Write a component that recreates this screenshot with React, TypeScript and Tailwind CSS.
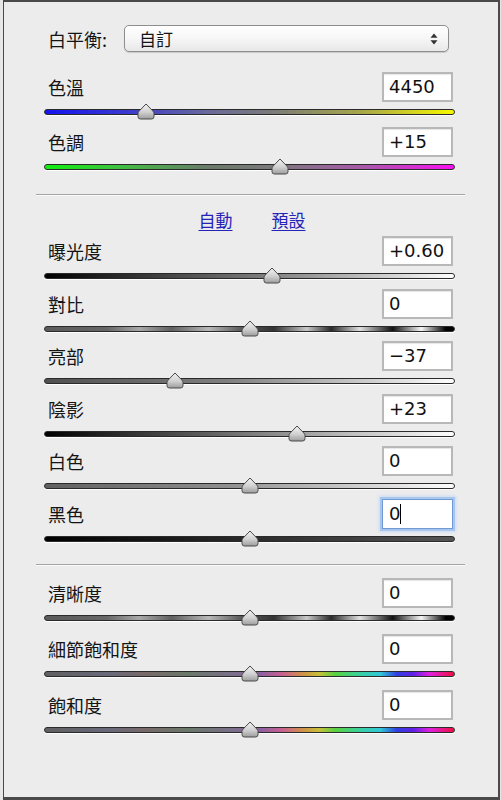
import React from "react";

type Row = {
  label: string;
  value: string;
  pos: number; // thumb center x in page px
  track: string;
  focused?: boolean;
};

const TRACK_LEFT = 44;
const TRACK_W = 411;

const contrast =
  "bg-[linear-gradient(to_right,#5a5a5a_0%,#666_15%,#a8a8a8_23%,#606060_31%,#b8b8b8_40%,#5a5a5a_48%,#333_56%,#c8c8c8_64%,#2a2a2a_70%,#e0e0e0_77%,#111_85%,#f4f4f4_92%,#000_98%)]";
const sat =
  "bg-[linear-gradient(to_right,#606060_0%,#68687a_15%,#786a6a_25%,#6a786a_35%,#787088_45%,#9060a0_53%,#c86090_58%,#d09048_63%,#c8c038_67%,#58d040_71%,#38d0a0_77%,#30c8d8_82%,#3040e0_86%,#6020e8_90%,#e020e0_94%,#f01040_100%)]";

const group1: Row[] = [
  {
    label: "色溫",
    value: "4450",
    pos: 146,
    track:
      "bg-[linear-gradient(to_right,#1414f0_0%,#3a3ad0_20%,#6a6a9a_40%,#7a7a7a_55%,#a8a848_78%,#f8f800_100%)]",
  },
  {
    label: "色調",
    value: "+15",
    pos: 280,
    track:
      "bg-[linear-gradient(to_right,#10f010_0%,#40c040_18%,#6a7a6a_40%,#7a7a7a_55%,#a858a8_78%,#f810f0_100%)]",
  },
];

const group2: Row[] = [
  {
    label: "曝光度",
    value: "+0.60",
    pos: 272,
    track: "bg-[linear-gradient(to_right,#000_0%,#505050_35%,#9a9a9a_65%,#fff_100%)]",
  },
  { label: "對比", value: "0", pos: 250, track: contrast },
  {
    label: "亮部",
    value: "−37",
    pos: 175,
    track: "bg-[linear-gradient(to_right,#505050_0%,#808080_45%,#fff_100%)]",
  },
  {
    label: "陰影",
    value: "+23",
    pos: 297,
    track: "bg-[linear-gradient(to_right,#000_0%,#606060_40%,#c0c0c0_75%,#fff_100%)]",
  },
  {
    label: "白色",
    value: "0",
    pos: 250,
    track: "bg-[linear-gradient(to_right,#606060_0%,#909090_45%,#fff_100%)]",
  },
  {
    label: "黑色",
    value: "0",
    pos: 250,
    track: "bg-[linear-gradient(to_right,#000_0%,#2a2a2a_50%,#555_100%)]",
    focused: true,
  },
];

const group3: Row[] = [
  { label: "清晰度", value: "0", pos: 250, track: contrast },
  { label: "細節飽和度", value: "0", pos: 250, track: sat },
  { label: "飽和度", value: "0", pos: 250, track: sat },
];

function Thumb({ pos }: { pos: number }) {
  const pct = ((pos - TRACK_LEFT) / TRACK_W) * 100;
  return (
    <svg
      width="18"
      height="17"
      viewBox="0 0 18 17"
      className="absolute top-[-6px] -translate-x-1/2"
      style={{ left: `${pct}%` }}
    >
      <defs>
        <linearGradient id="thumbg" x1="0" y1="0" x2="0" y2="1">
          <stop offset="0" stopColor="#f4f4f4" />
          <stop offset="0.55" stopColor="#d0d0d0" />
          <stop offset="1" stopColor="#9c9c9c" />
        </linearGradient>
      </defs>
      <path
        d="M9 1 L15.8 8 Q17 9.2 17 10.6 L17 13.6 Q17 16 14.6 16 L3.4 16 Q1 16 1 13.6 L1 10.6 Q1 9.2 2.2 8 Z"
        fill="url(#thumbg)"
        stroke="#4a4a4a"
        strokeWidth="1"
      />
    </svg>
  );
}

function SliderRow({ row, h }: { row: Row; h: string }) {
  return (
    <div className={`${h} flex flex-col`}>
      <div className="flex items-center justify-between h-[30px] pl-[4px] pr-[2px]">
        <span className="text-[18px] leading-[20px] text-[#141414] font-['Noto_Sans_CJK_TC','Noto_Sans_CJK_SC',sans-serif]">
          {row.label}
        </span>
        <div
          className={
            row.focused
              ? "w-[71px] h-[30px] bg-white border border-[#6f9ad6] shadow-[0_0_0_2px_#a9c6ee,0_0_3px_3px_#c8dbf5] flex items-center pl-[6px]"
              : "w-[71px] h-[30px] bg-white border-2 border-[#b8b8b8] shadow-[inset_0_1px_1px_rgba(0,0,0,0.1)] flex items-center pl-[5px]"
          }
        >
          <span className="text-[18px] leading-[20px] text-[#111] font-['DejaVu_Sans',sans-serif]">
            {row.value}
          </span>
          {row.focused && <span className="w-px h-[20px] bg-black" />}
        </div>
      </div>
      <div className="relative mt-[7px] h-[6px]">
        <div
          className={`h-[6px] rounded-full border border-[#2a2a2a] shadow-[0_1px_0_#ffffff] ${row.track}`}
        />
        <Thumb pos={row.pos} />
      </div>
    </div>
  );
}

export default function App() {
  return (
    <div className="w-[501px] h-[800px] bg-[#e6e6e6] pl-[3px] pr-px">
      <div className="h-full border-l border-t-2 border-r-2 border-b-[3px] border-[#4a4a4a] bg-[#ececec] flex flex-col">
        {/* White balance */}
        <div className="mt-[23px] flex items-center pl-[44px]">
          <span className="w-[76px] text-[18px] leading-[20px] text-[#141414] font-['Noto_Sans_CJK_TC','Noto_Sans_CJK_SC',sans-serif]">
            白平衡:
          </span>
          <div className="w-[325px] h-[27px] rounded-[5px] border border-[#8e8e8e] bg-[linear-gradient(to_bottom,#ffffff,#f6f6f6_50%,#e8e8e8)] shadow-[0_1px_1px_rgba(0,0,0,0.15)] flex items-center justify-between pl-[14px] pr-[10px]">
            <span className="text-[17px] leading-[20px] text-[#141414] font-['Noto_Sans_CJK_TC','Noto_Sans_CJK_SC',sans-serif]">
              自訂
            </span>
            <svg width="8" height="12" viewBox="0 0 8 12">
              <path d="M4 0.5 L7.5 4.8 L0.5 4.8 Z" fill="#333" />
              <path d="M4 11.5 L7.5 7.2 L0.5 7.2 Z" fill="#333" />
            </svg>
          </div>
        </div>

        <div className="mt-[20px] pl-[40px] pr-[43px]">
          {group1.map((r) => (
            <SliderRow key={r.label} row={r} h="h-[55px]" />
          ))}
        </div>

        <div className="mt-[12px] ml-[32px] mr-[33px] h-px bg-[#a4a4a4] shadow-[0_1px_0_#fafafa]" />

        <div className="h-[41px] pt-[16px] flex justify-center gap-[39px] pl-[2px]">
          <span className="text-[17px] leading-[18px] text-[#2323b8] underline underline-offset-[3px] font-['Noto_Sans_CJK_TC','Noto_Sans_CJK_SC',sans-serif]">
            自動
          </span>
          <span className="text-[17px] leading-[18px] text-[#2323b8] underline underline-offset-[3px] font-['Noto_Sans_CJK_TC','Noto_Sans_CJK_SC',sans-serif]">
            預設
          </span>
        </div>

        <div className="pl-[40px] pr-[43px]">
          {group2.map((r) => (
            <SliderRow key={r.label} row={r} h="h-[52.5px]" />
          ))}
        </div>

        <div className="mt-[13px] ml-[32px] mr-[33px] h-px bg-[#a4a4a4] shadow-[0_1px_0_#fafafa]" />

        <div className="mt-[13px] pl-[40px] pr-[43px]">
          {group3.map((r) => (
            <SliderRow key={r.label} row={r} h="h-[56px]" />
          ))}
        </div>
      </div>
    </div>
  );
}
